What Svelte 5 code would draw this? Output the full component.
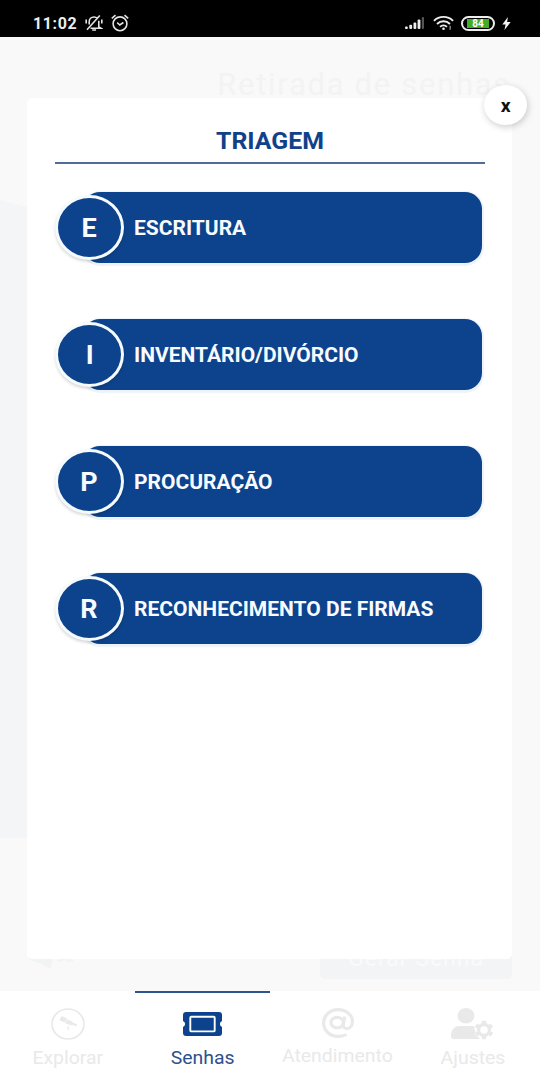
<script>
  let services = [
    { letter: "E", name: "ESCRITURA" },
    { letter: "I", name: "INVENTÁRIO/DIVÓRCIO" },
    { letter: "P", name: "PROCURAÇÃO" },
    { letter: "R", name: "RECONHECIMENTO DE FIRMAS" },
  ];

  let tabs = ["Explorar", "Senhas", "Atendimento", "Ajustes"];
  let activeTab = "Senhas";
  let isOpened = true;
</script>

<div class="phone">
  <header class="status">
    <div class="status-side">
      <span class="clock">11:02</span>
      <svg class="bell" width="18" height="18" viewBox="0 0 18 18" fill="none" stroke="#e4e4e4" stroke-width="1.6">
        <path d="M4.2 10.5V8c0-3 2-5 4.8-5 1.4 0 2.500.5 3.300 1.300M13.800 6.800v6.200l2 1.200H5.500M7.200 16h3.800M2 15.800L14.800 1.500M1.200 5.500v4M16.800 5.500v4" />
      </svg>
      <svg width="18" height="18" viewBox="0 0 18 18" fill="none" stroke="#e4e4e4" stroke-width="1.6">
        <circle cx="9" cy="9.8" r="6.9" />
        <path d="M6.2 8.700L8.800 11l3.600-2.500M.8 4.300L4.500 1.200M17.200 4.300L13.500 1.200" />
      </svg>
    </div>
    <div class="status-side right">
      <svg width="21" height="14" viewBox="0 0 21 14" fill="#ededed">
        <rect x="0" y="10.5" width="2.8" height="2.5" rx="1" />
        <rect x="4.3" y="8.8" width="2.8" height="4.2" rx="1" />
        <rect x="8.5" y="6.5" width="2.8" height="6.5" rx="1" />
        <rect x="12.6" y="3.5" width="2.8" height="9.5" rx="1" />
        <rect x="16.8" y="1" width="2.2" height="12" rx="1" fill="#555" />
      </svg>
      <svg class="wifi" width="21" height="16" viewBox="0 0 22 16" fill="none" stroke="#ededed" stroke-width="2">
        <path d="M1 5.700C6.500 .2 15.500 .2 21 5.700M4.200 9C8 5.300 14 5.300 17.800 9M7.400 12c2-2 5.200-2 7.200 0" />
        <circle cx="11" cy="14" r="1.4" fill="#ededed" stroke="none" />
        <path d="M18 11v4" stroke="#888" stroke-width="1.5" />
      </svg>
      <div class="battery"><span>84</span></div>
      <svg width="9" height="13" viewBox="0 0 9 14" fill="#f2f2f2">
        <path d="M6 0L0 8h3.500L2.300 14L9 5.500H5.200z" />
      </svg>
    </div>
  </header>

  <main>
    <h1>Retirada de senhas</h1>
    <div class="backdrop-shape"></div>
    <svg class="back-arrow" width="50" height="22" viewBox="0 0 50 22" fill="#f1f3f5">
      <path d="M0 5h24v6l-2 7-8-5-12-4zM30 8l7-3 9 5-6 1-3-2-7 2z" />
    </svg>
    <div class="generate">Gerar Senha</div>

    {#if isOpened}
      <section class="modal">
        <button class="close" aria-label="Fechar" on:click={() => (isOpened = false)}><span>x</span></button>
        <h2><span>TRIAGEM</span></h2>
        <ul>
          {#each services as service}
            <li>
              <div class="badge"><span>{service.letter}</span></div>
              <div class="bar"><span>{service.name}</span></div>
            </li>
          {/each}
        </ul>
      </section>
    {/if}
  </main>

  <nav>
    {#each tabs as tab}
      <button class="tab" class:active={tab === activeTab} class:raised={tab === "Atendimento"} on:click={() => (activeTab = tab)}>
        <div class="icon">
          {#if tab === "Explorar"}
            <svg width="34" height="32" viewBox="0 0 34 32">
              <ellipse cx="17" cy="16" rx="16" ry="15" fill="none" stroke="currentColor" stroke-width="1.7" />
              <path d="M10.500 8l5.500 2.200-2 4.300-5.500-2.200zM16 11.500l6 2.300-1.700 3.700-6-2.300zM21.500 14.500l4.700 1.800-1 2-4.400-1.600zM16.500 18.500h1.400v3.300h-1.400z" fill="currentColor" />
            </svg>
          {:else if tab === "Senhas"}
            <svg width="39" height="24" viewBox="0 0 39 24">
              <path d="M3 0h33a3 3 0 0 1 3 3v6a3.200 3.200 0 0 0 0 6v6a3 3 0 0 1-3 3H3a3 3 0 0 1-3-3v-6a3.200 3.200 0 0 0 0-6V3a3 3 0 0 1 3-3z" fill="currentColor" />
              <rect x="7.300" y="4.800" width="24.400" height="14.600" rx="1" fill="none" stroke="#fff" stroke-width="1.900" />
            </svg>
          {:else if tab === "Atendimento"}
            <svg width="32" height="30" viewBox="0 0 32 30" fill="none" stroke="currentColor" stroke-width="3.200">
              <path d="M24.500 26.500C22 28 19 28.400 16 28.400C8 28.400 1.600 22.400 1.600 15S8 1.600 16 1.600S30.400 6.500 30.400 13.400C30.400 18 27.800 20.500 24.800 20.500C22 20.500 20.800 18.800 21.300 16.300L22.800 8.500" />
              <ellipse cx="15.200" cy="14.600" rx="6.300" ry="5.300" />
            </svg>
          {:else}
            <svg width="43" height="32" viewBox="0 0 43 32" fill="currentColor">
              <ellipse cx="15" cy="7.800" rx="8.400" ry="7.800" />
              <path d="M8.500 18h13c1 0 1.800.3 2.400.8-1.400 1.800-.4 3 .6 4.100-1.400 2.600.2 5.600 4 6.800V31H2.500A2.500 2.500 0 0 1 0 28.500v-2.200A8.500 8.500 0 0 1 8.500 18z" />
              <circle cx="33" cy="22" r="5.500" fill="none" stroke="currentColor" stroke-width="3.400" />
              <path d="M33 12.800v4M33 27.200v4M25 17.400l3.500 2M37.500 24.600l3.500 2M25 26.600l3.500-2M37.500 19.400l3.500-2" stroke="currentColor" stroke-width="4.300" />
            </svg>
          {/if}
        </div>
        <span class="label">{tab}</span>
      </button>
    {/each}
  </nav>
</div>

<style>
  :global(body) {
    margin: 0;
  }

  .phone {
    display: flex;
    flex-direction: column;
    width: 540px;
    height: 1080px;
    overflow: hidden;
    background-color: #fff;
    font-family: Roboto, sans-serif;
  }

  button {
    padding: 0;
    border: none;
    font-family: inherit;
  }

  .status {
    display: flex;
    justify-content: space-between;
    box-sizing: border-box;
    height: 37px;
    padding: 9px 29px 0 33px;
    background-color: #000;
  }

  .status-side {
    display: flex;
    align-items: center;
    height: 28px;
    gap: 8px;
  }

  .right {
    gap: 7px;
  }

  .clock {
    color: #eee;
    font-size: 16px;
    font-weight: 700;
    letter-spacing: 0.6px;
  }

  .battery {
    display: flex;
    box-sizing: border-box;
    width: 34px;
    height: 15px;
    padding: 1px 4px;
    border: 2px solid #ededed;
    border-radius: 8px;
  }

  .battery span {
    width: 100%;
    background-color: #43ad26;
    color: #fff;
    font-size: 10px;
    font-weight: 700;
    line-height: 9px;
    text-align: center;
  }

  main {
    position: relative;
    box-sizing: border-box;
    height: 954px;
    padding: 61px 28px 32px 27px;
    background-color: #f9f9f9;
  }

  /* faded page behind the modal */
  h1 {
    position: absolute;
    top: 30px;
    right: 29px;
    margin: 0;
    color: #f3f3f4;
    font-size: 31px;
    font-weight: 400;
    line-height: 36px;
    letter-spacing: 1.7px;
  }

  .backdrop-shape {
    position: absolute;
    top: 163px;
    left: 0;
    width: 130px;
    height: 638px;
    background-color: #f3f5f7;
    clip-path: polygon(0 0, 100% 34px, 100% 100%, 0 100%);
  }

  .back-arrow {
    position: absolute;
    top: 914px;
    left: 28px;
  }

  .generate {
    position: absolute;
    right: 28px;
    bottom: 12px;
    width: 192px;
    height: 52px;
    border-radius: 5px;
    background-color: #f3f4f6;
    color: #fafafb;
    font-size: 23px;
    line-height: 63px;
    letter-spacing: 1px;
    text-align: center;
  }

  .modal {
    position: relative;
    box-sizing: border-box;
    height: 861px;
    padding: 27px 27px 0 28px;
    border-radius: 5px;
    background-color: #fff;
  }

  .close {
    position: absolute;
    top: -13px;
    right: -15px;
    width: 43px;
    height: 40px;
    border-radius: 50%;
    background-color: #fff;
    box-shadow: 1px 2px 7px rgba(0, 0, 0, 0.2);
    color: #111;
    font-size: 18px;
    font-weight: 700;
    line-height: 37px;
  }

  h2 {
    height: 37px;
    margin: 0;
    border-bottom: 2px solid #4f6d98;
    color: #10428a;
    font-size: 23px;
    font-weight: 700;
    line-height: 33px;
    text-align: center;
  }

  h2 span,
  .close span,
  .badge span,
  .label {
    display: inline-block;
    transform: scaleX(1.08);
  }

  ul {
    display: flex;
    flex-direction: column;
    gap: 57px;
    margin: 28px 3px 0 0;
    padding: 0;
    list-style: none;
  }

  li {
    display: flex;
    align-items: center;
    height: 70px;
  }

  .badge {
    z-index: 1;
    box-sizing: border-box;
    flex: none;
    width: 69px;
    height: 65px;
    border: 3px solid #f5fafd;
    border-radius: 50%;
    background-color: #0d438c;
    box-shadow: 0 2px 3px rgba(0, 0, 0, 0.15);
    color: #f8fbff;
    font-size: 25px;
    font-weight: 700;
    line-height: 61px;
    text-align: center;
  }

  .bar {
    flex: 1;
    height: 71px;
    margin-left: -41px;
    padding-left: 51px;
    border-radius: 17px;
    background-color: #0d438c;
    box-shadow: 0 1px 1px 2px #eef3f8;
    color: #f8fbff;
    font-size: 19.5px;
    font-weight: 700;
    line-height: 73px;
    white-space: nowrap;
  }

  .bar span {
    display: inline-block;
    transform: scaleX(1.077);
    transform-origin: left;
  }

  nav {
    display: flex;
    height: 89px;
    background-color: #fff;
  }

  .tab {
    display: flex;
    flex: 1;
    flex-direction: column;
    align-items: center;
    box-sizing: border-box;
    border-top: 2px solid transparent;
    background-color: #fff;
    color: #e9e9e9;
  }

  .tab.active {
    border-color: #2c5590;
    color: #0d438c;
  }

  .icon {
    display: flex;
    align-items: center;
    justify-content: center;
    height: 62px;
  }

  .label {
    margin-top: -9px;
    font-size: 18px;
    line-height: 24px;
  }

  .active .label {
    color: #2d5189;
  }

  /* longest label sits slightly closer to its icon */
  .raised .icon {
    height: 60px;
  }
</style>
